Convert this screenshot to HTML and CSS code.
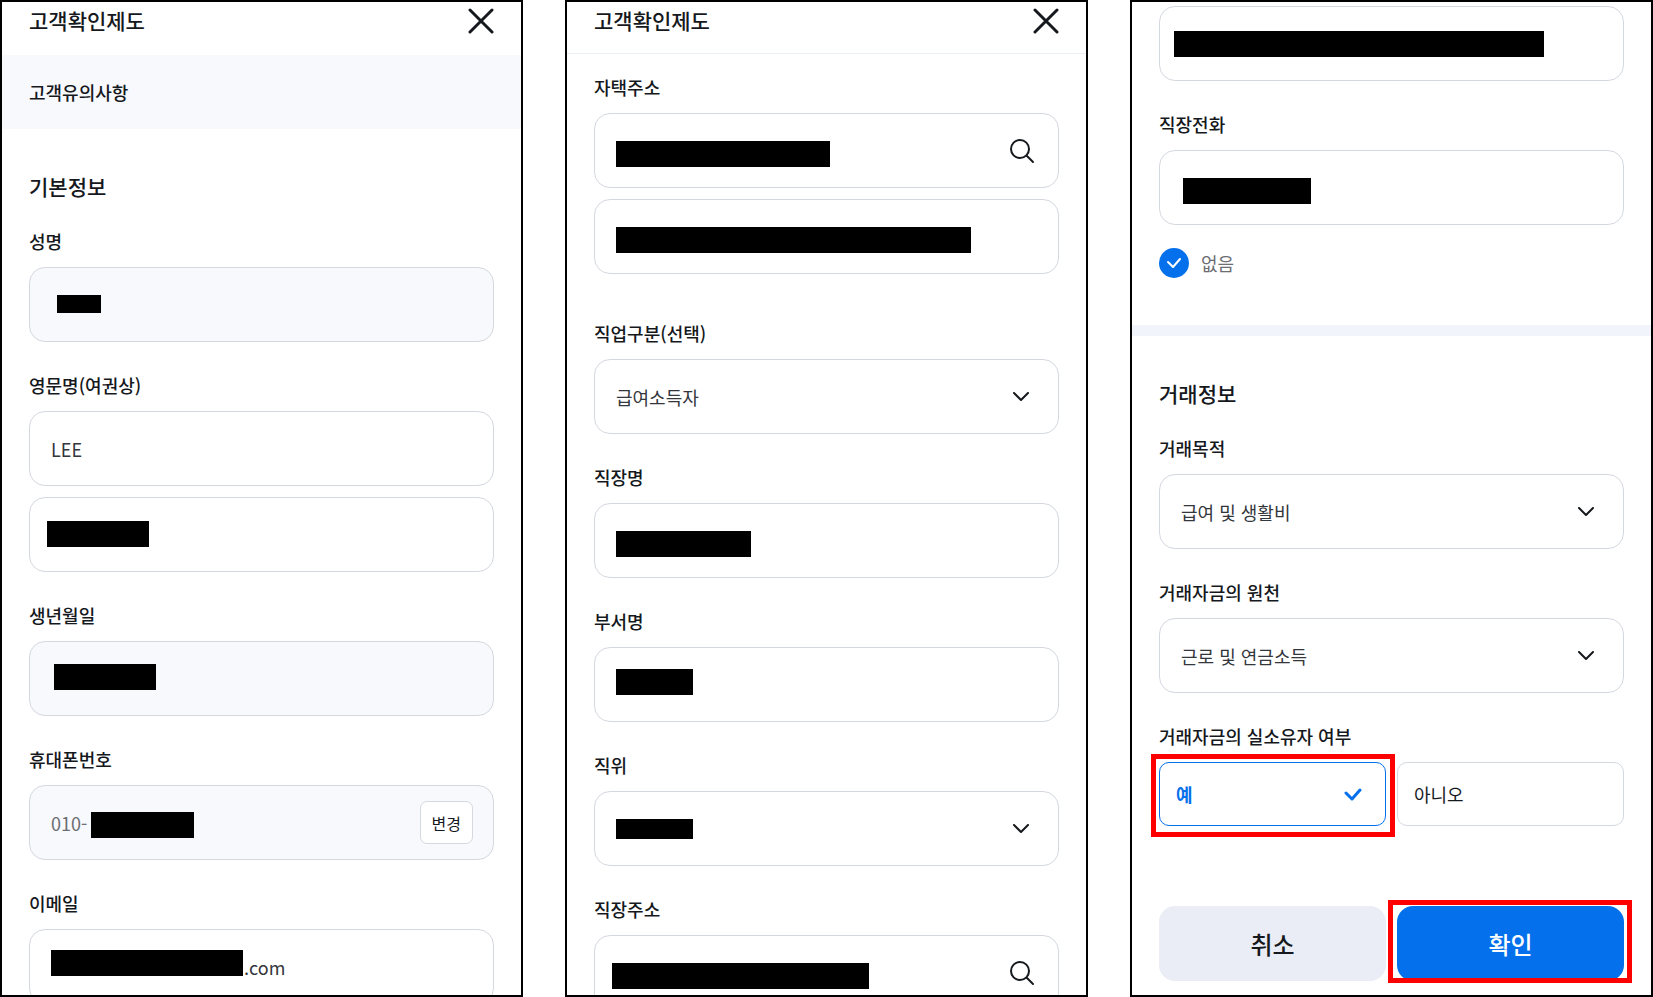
FILE: index.html
```html
<!DOCTYPE html>
<html lang="ko">

<head>
    <meta charset="UTF-8">
    <meta name="viewport" content="width=device-width, initial-scale=1.0">
    <title>고객확인제도</title>
    <link rel="stylesheet" href="styles.css">
</head>

<body>
    <main class="screens">
        <!-- basic info -->
        <section class="screen">
            <header class="header">
                <h1>고객확인제도</h1>
                <button class="close" type="button" aria-label="닫기">
                    <svg width="26" height="26" viewBox="0 0 26 26"><path d="M2 2l22 22M24 2L2 24" /></svg>
                </button>
            </header>
            <div class="notice">고객유의사항</div>
            <form class="form">
                <h2>기본정보</h2>
                <div class="group">
                    <label for="name">성명</label>
                    <div class="field readonly">
                        <input type="text" id="name" readonly>
                        <span class="mask mask-name"></span>
                    </div>
                </div>
                <div class="group">
                    <label for="last-name">영문명(여권상)</label>
                    <div class="field">
                        <input type="text" id="last-name" value="LEE">
                    </div>
                    <div class="field">
                        <input type="text" id="first-name" aria-label="영문 이름">
                        <span class="mask mask-first"></span>
                    </div>
                </div>
                <div class="group">
                    <label for="birth">생년월일</label>
                    <div class="field readonly">
                        <input type="text" id="birth" readonly>
                        <span class="mask mask-birth"></span>
                    </div>
                </div>
                <div class="group">
                    <label for="phone">휴대폰번호</label>
                    <div class="field readonly">
                        <input type="text" id="phone" value="010-" readonly>
                        <span class="mask mask-phone"></span>
                        <button class="change" type="button">변경</button>
                    </div>
                </div>
                <div class="group">
                    <label for="email">이메일</label>
                    <div class="field">
                        <input type="text" id="email" class="email" value=".com">
                        <span class="mask mask-email"></span>
                    </div>
                </div>
            </form>
        </section>

        <!-- address and job -->
        <section class="screen">
            <header class="header line">
                <h1>고객확인제도</h1>
                <button class="close" type="button" aria-label="닫기">
                    <svg width="26" height="26" viewBox="0 0 26 26"><path d="M2 2l22 22M24 2L2 24" /></svg>
                </button>
            </header>
            <form class="form form-job">
                <div class="group group-wide">
                    <label for="home">자택주소</label>
                    <div class="field">
                        <input type="text" id="home">
                        <span class="mask mask-home"></span>
                        <button class="search" type="button" aria-label="주소 검색">
                            <svg width="26" height="26" viewBox="0 0 26 26"><circle cx="11" cy="11" r="9" /><path d="M18 18l6 6" /></svg>
                        </button>
                    </div>
                    <div class="field">
                        <input type="text" id="home-detail" aria-label="자택 상세주소">
                        <span class="mask mask-home-detail"></span>
                    </div>
                </div>
                <div class="group">
                    <label for="job">직업구분(선택)</label>
                    <div class="field">
                        <select id="job">
                            <option>급여소득자</option>
                        </select>
                        <svg class="arrow" width="18" height="10" viewBox="0 0 18 10"><path d="M2 1l7 7 7-7" /></svg>
                    </div>
                </div>
                <div class="group">
                    <label for="company">직장명</label>
                    <div class="field">
                        <input type="text" id="company">
                        <span class="mask mask-company"></span>
                    </div>
                </div>
                <div class="group">
                    <label for="dept">부서명</label>
                    <div class="field">
                        <input type="text" id="dept">
                        <span class="mask mask-dept"></span>
                    </div>
                </div>
                <div class="group">
                    <label for="position">직위</label>
                    <div class="field">
                        <select id="position">
                            <option></option>
                        </select>
                        <span class="mask mask-position"></span>
                        <svg class="arrow" width="18" height="10" viewBox="0 0 18 10"><path d="M2 1l7 7 7-7" /></svg>
                    </div>
                </div>
                <div class="group">
                    <label for="work">직장주소</label>
                    <div class="field">
                        <input type="text" id="work">
                        <span class="mask mask-work"></span>
                        <button class="search" type="button" aria-label="주소 검색">
                            <svg width="26" height="26" viewBox="0 0 26 26"><circle cx="11" cy="11" r="9" /><path d="M18 18l6 6" /></svg>
                        </button>
                    </div>
                </div>
            </form>
        </section>

        <!-- transaction info -->
        <section class="screen">
            <form>
                <div class="form form-tel">
                    <div class="group">
                        <div class="field">
                            <input type="text" id="work-detail" aria-label="직장 상세주소">
                            <span class="mask mask-work-detail"></span>
                        </div>
                    </div>
                    <div class="group">
                        <label for="tel">직장전화</label>
                        <div class="field">
                            <input type="text" id="tel">
                            <span class="mask mask-tel"></span>
                        </div>
                    </div>
                    <div class="check">
                        <span class="check-box">
                            <input type="checkbox" id="no-tel" checked>
                            <svg width="14" height="10" viewBox="0 0 14 10"><path d="M1 4l5 5 7-8" /></svg>
                        </span>
                        <label for="no-tel">없음</label>
                    </div>
                </div>
                <div class="divider"></div>
                <div class="form">
                    <h2>거래정보</h2>
                    <div class="group">
                        <label for="purpose">거래목적</label>
                        <div class="field">
                            <select id="purpose">
                                <option>급여 및 생활비</option>
                            </select>
                            <svg class="arrow" width="18" height="10" viewBox="0 0 18 10"><path d="M2 1l7 7 7-7" /></svg>
                        </div>
                    </div>
                    <div class="group">
                        <label for="source">거래자금의 원천</label>
                        <div class="field">
                            <select id="source">
                                <option>근로 및 연금소득</option>
                            </select>
                            <svg class="arrow" width="18" height="10" viewBox="0 0 18 10"><path d="M2 1l7 7 7-7" /></svg>
                        </div>
                    </div>
                    <fieldset class="owner">
                        <legend>거래자금의 실소유자 여부</legend>
                        <div class="pair">
                            <label class="choice highlight">
                                <input type="radio" name="owner" checked>
                                <span>예</span>
                                <svg width="18" height="13" viewBox="0 0 18 13"><path d="M2 5l6 6 8-9" /></svg>
                            </label>
                            <label class="choice">
                                <input type="radio" name="owner">
                                <span>아니오</span>
                            </label>
                        </div>
                    </fieldset>
                    <div class="pair actions">
                        <button class="btn cancel" type="button">취소</button>
                        <button class="btn confirm highlight" type="button">확인</button>
                    </div>
                </div>
            </form>
        </section>
    </main>
</body>

</html>
```
FILE: styles.css
```css
* {
    padding: 0;
    margin: 0;
    box-sizing: border-box;
    font-family: "Noto Sans CJK KR", sans-serif;
}

body {
    background: #ffffff;
    color: #15181c;
    font-size: 18px;
    line-height: 28px;
}

button {
    border: none;
    background: none;
    color: inherit;
    cursor: pointer;
}

svg {
    display: block;
    fill: none;
    stroke: #15181c;
    stroke-width: 2;
    stroke-linecap: round;
    stroke-linejoin: round;
}

.screens {
    display: grid;
    grid-template-columns: repeat(3, 1fr);
    gap: 42px;
}

.screen {
    height: 100vh;
    border: 2px solid #000000;
    overflow: hidden;
}

.header {
    display: flex;
    justify-content: space-between;
    align-items: center;
    padding: 3px 27px 18px;
}

.header.line {
    padding-bottom: 16px;
    border-bottom: 1px solid #e9eff5;
}

h1,
h2 {
    font-size: 21px;
    line-height: 30px;
    font-weight: 500;
}

h1 {
    padding-bottom: 2px;
}

h2 {
    margin-bottom: 26px;
}

.close svg {
    stroke-width: 3;
}

.notice {
    padding: 23px 27px;
    background: #f8f9fd;
    font-weight: 500;
}

.form {
    padding: 42px 27px 0;
}

.form-job {
    padding-top: 19px;
}

.form-tel {
    padding-top: 4px;
}

.group {
    display: flex;
    flex-direction: column;
    margin-bottom: 29px;
}

.group-wide {
    margin-bottom: 45px;
}

.group label,
.owner legend {
    margin-bottom: 12px;
    font-weight: 500;
}

.field {
    position: relative;
    display: flex;
    align-items: center;
    height: 75px;
    border: 1px solid #d4d8df;
    border-radius: 16px;
    background: #ffffff;
}

.field + .field {
    margin-top: 11px;
}

.field.readonly {
    background: #f8f9fd;
}

.field input,
.field select {
    flex: 1;
    min-width: 0;
    height: 100%;
    padding: 0 21px;
    border: none;
    outline: none;
    background: none;
    appearance: none;
    color: #33363b;
    font-size: 18px;
}

.field.readonly input {
    color: #6b6d72;
}

.field input.email {
    padding-left: 214px;
}

.search {
    margin-right: 23px;
}

.arrow {
    position: absolute;
    right: 28px;
    pointer-events: none;
}

.change {
    height: 43px;
    margin-right: 20px;
    padding: 0 11px;
    border: 1px solid #d4d8df;
    border-radius: 7px;
    background: #ffffff;
    font-size: 16px;
}

/* black bars over the personal data */
.mask {
    position: absolute;
    top: 27px;
    left: 21px;
    height: 26px;
    background: #000000;
}

.mask-name {
    left: 27px;
    width: 44px;
    height: 18px;
}

.mask-first {
    top: 23px;
    left: 17px;
    width: 102px;
}

.mask-birth {
    top: 22px;
    left: 24px;
    width: 102px;
}

.mask-phone {
    top: 26px;
    left: 61px;
    width: 103px;
}

.mask-email {
    top: 20px;
    width: 192px;
}

.mask-home {
    width: 214px;
}

.mask-home-detail {
    width: 355px;
}

.mask-company {
    width: 135px;
}

.mask-dept {
    top: 21px;
    width: 77px;
}

.mask-position {
    width: 77px;
    height: 20px;
}

.mask-work {
    left: 17px;
    width: 257px;
}

.mask-work-detail {
    top: 24px;
    left: 14px;
    width: 370px;
}

.mask-tel {
    left: 23px;
    width: 128px;
}

.check {
    display: flex;
    align-items: center;
    gap: 12px;
    margin-top: -6px;
    margin-bottom: 47px;
    color: #6b6d72;
}

.check-box {
    display: grid;
    place-items: center;
}

.check-box input,
.check-box svg {
    grid-area: 1 / 1;
}

.check-box input {
    width: 30px;
    height: 30px;
    border-radius: 50%;
    appearance: none;
    background: #0570eb;
}

.check-box svg {
    stroke: #ffffff;
    pointer-events: none;
}

.divider {
    height: 11px;
    background: #f1f5fb;
}

.owner {
    border: none;
}

.pair {
    display: grid;
    grid-template-columns: 1fr 1fr;
    gap: 11px;
}

.choice {
    position: relative;
    display: flex;
    justify-content: space-between;
    align-items: center;
    height: 64px;
    padding: 0 23px 0 16px;
    border: 1px solid #d4d8df;
    border-radius: 10px;
}

.choice input {
    position: absolute;
    opacity: 0;
}

.choice:has(input:checked) {
    border-color: #0570eb;
    color: #0570eb;
    font-weight: 700;
}

.choice svg {
    stroke: #0570eb;
    stroke-width: 3;
}

.actions {
    margin-top: 80px;
}

.btn {
    position: relative;
    height: 75px;
    border-radius: 16px;
    font-size: 24px;
    font-weight: 500;
}

.cancel {
    background: #eaedf5;
}

.confirm {
    background: #0570eb;
    color: #ffffff;
}

/* red guide box */
.highlight::after {
    content: "";
    position: absolute;
    inset: -9px -10px -12px -9px;
    border: 5px solid #ff0000;
}

.confirm.highlight::after {
    inset: -6px -8px -2px -9px;
}
```
